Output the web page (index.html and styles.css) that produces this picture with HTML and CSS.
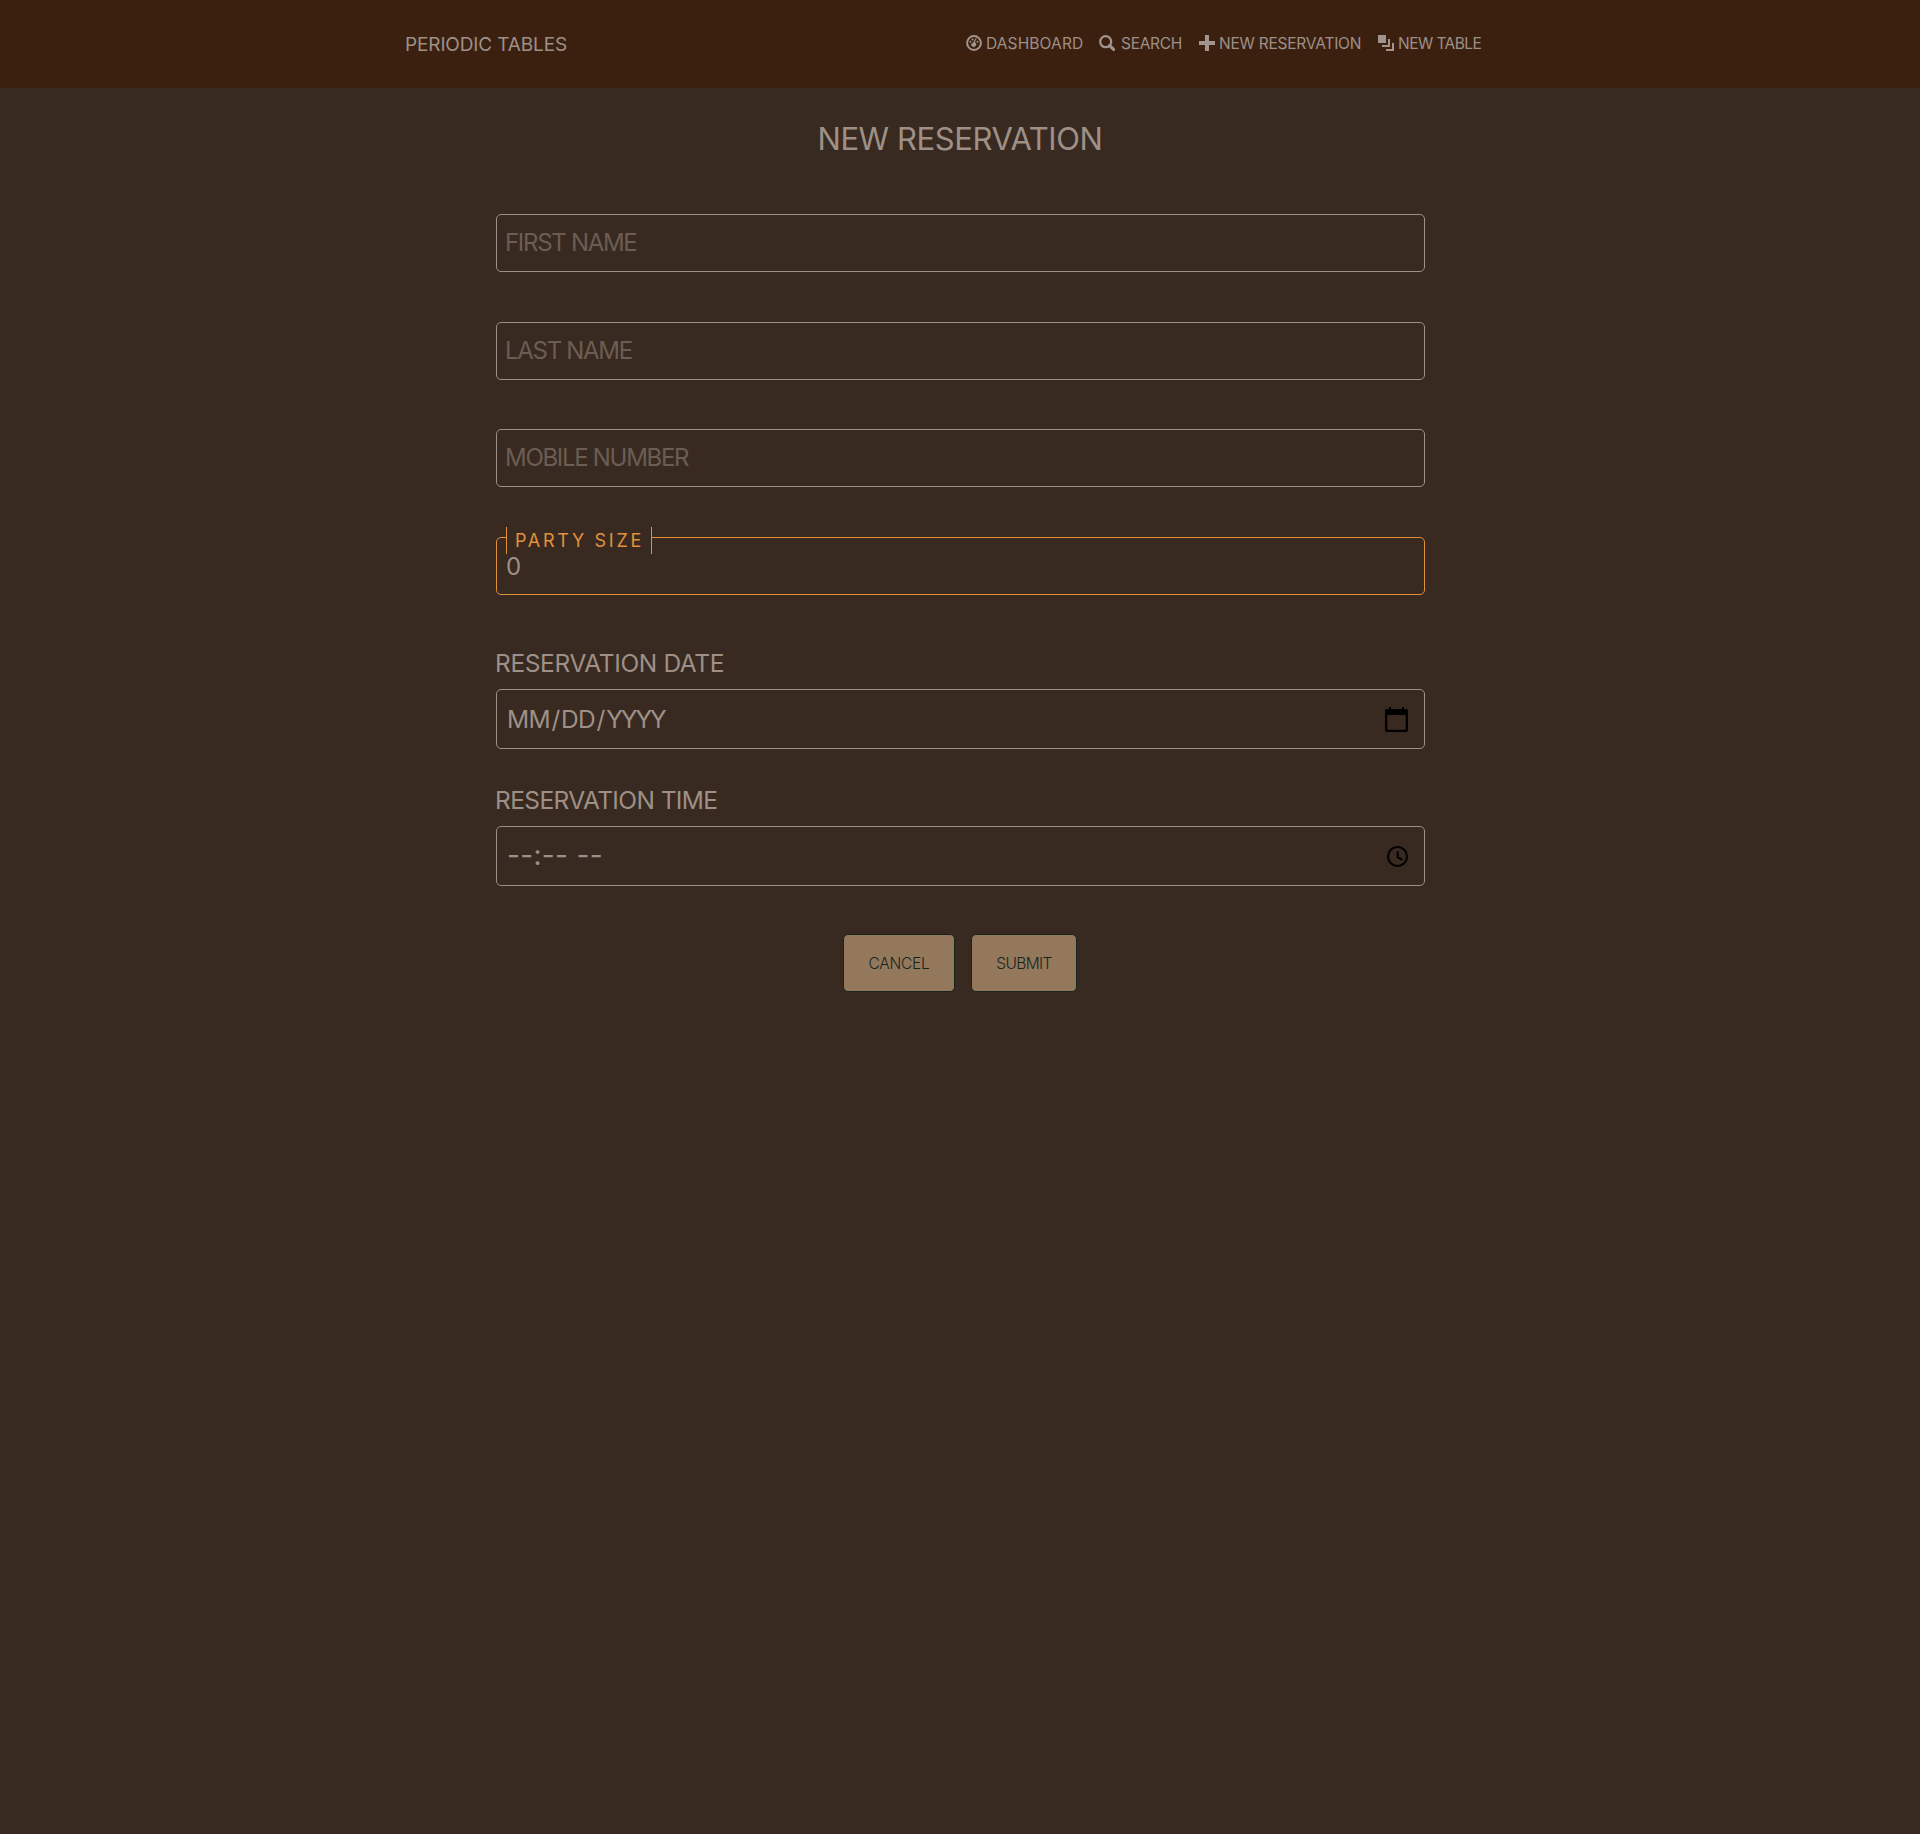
FILE: index.html
```
<!DOCTYPE html>
<html lang="en">
<head>
<meta charset="utf-8">
<title>Periodic Tables</title>
<link rel="stylesheet" href="styles.css">
</head>
<body>
<header class="header">
  <a class="brand">PERIODIC TABLES</a>
  <nav class="nav">
    <a class="nav-item">
      <svg class="icon" viewBox="0 0 16 16"><circle cx="8" cy="8" r="6.9" fill="none" stroke="currentColor" stroke-width="2"/><circle cx="4.4" cy="6.8" r="1"/><circle cx="6.6" cy="4.5" r="1"/><circle cx="11.5" cy="6.8" r="1"/><path d="M10.8 3.6L8.7 7.2a2.2 2.2 0 1 1-1.6.2L9.7 3.3zM4.6 8.4l3 1 1.2 3-3-1.2z"/></svg>
      <span class="t-dashboard">DASHBOARD</span>
    </a>
    <a class="nav-item">
      <svg class="icon" viewBox="0 0 16 16"><circle cx="6.7" cy="6.7" r="5.5" fill="none" stroke="currentColor" stroke-width="2.3"/><path d="M10.6 10.6l4 3.8" stroke="currentColor" stroke-width="3.2" stroke-linecap="round"/></svg>
      <span class="t-search">SEARCH</span>
    </a>
    <a class="nav-item">
      <svg class="icon" viewBox="0 0 16 16"><path d="M6 0h4v6h6v4h-6v6H6v-6H0V6h6z"/></svg>
      <span class="t-reservation">NEW RESERVATION</span>
    </a>
    <a class="nav-item">
      <svg class="icon" viewBox="0 0 16 16"><path d="M0 0h8v8H0zM10 4h2v8H4v-2h6zM14 8h2v8H8v-2h6z"/></svg>
      <span class="t-table">NEW TABLE</span>
    </a>
  </nav>
</header>
<main class="main">
  <h1 class="title">NEW RESERVATION</h1>
  <form class="form">
    <input class="field" type="text" placeholder="FIRST NAME">
    <input class="field" type="text" placeholder="LAST NAME">
    <input class="field" type="text" placeholder="MOBILE NUMBER">
    <div class="party">
      <input class="field field-active" type="text" value="0">
      <label class="legend">PARTY SIZE</label>
    </div>
    <label class="label label-date">RESERVATION DATE</label>
    <div class="picker">
      <span class="t-date">MM<span class="slash">/</span>DD<span class="slash">/</span><span class="year">YYYY</span></span>
      <svg class="calendar" viewBox="0 0 23 25"><path fill-rule="evenodd" d="M4 0h2v2h11V0h2v2h2a2 2 0 0 1 2 2v19a2 2 0 0 1-2 2H2a2 2 0 0 1-2-2V4a2 2 0 0 1 2-2h2zM2.3 8v14.8h18.4V8z"/></svg>
    </div>
    <label class="label label-time">RESERVATION TIME</label>
    <div class="picker">
      <span class="t-time">--:-- --</span>
      <svg class="clock" viewBox="0 0 21 21"><circle cx="10.5" cy="10.5" r="9.5"/><path d="M10.7 5.2v6l4.5 2.7"/></svg>
    </div>
    <div class="actions">
      <button class="button t-cancel" type="button">CANCEL</button>
      <button class="button t-submit" type="button">SUBMIT</button>
    </div>
  </form>
</main>
</body>
</html>
```
FILE: styles.css
```
* { box-sizing: border-box; }
body {
  margin: 0;
  min-height: 1834px;
  background: #382a20;
  color: #9e9087;
  font-family: Inter, "Liberation Sans", sans-serif;
}
.header {
  display: flex;
  justify-content: space-between;
  align-items: center;
  height: 88px;
  padding: 0 443px 0 405px;
  background: #3b2010;
}
.brand { font-size: 19px; letter-spacing: -.13px; }
.nav {
  display: grid;
  grid-template-columns: 133px 100px 179px 99px;
}
.nav-item {
  display: flex;
  align-items: center;
  font-size: 15.5px;
  line-height: 20px;
  white-space: nowrap;
}
.icon { flex: none; width: 16px; height: 16px; margin: 0 4px 3px 0; fill: currentColor; color: #a2948c; }
.t-dashboard { letter-spacing: .13px; }
.t-search { letter-spacing: -.3px; padding-left: 2px; }
.t-reservation { letter-spacing: -.23px; }
.t-table { letter-spacing: -.55px; }
.title {
  margin: 0;
  padding-top: 30px;
  height: 126px;
  font-size: 31px;
  font-weight: 400;
  line-height: 41px;
  letter-spacing: -.41px;
  text-align: center;
}
.form {
  display: flex;
  flex-direction: column;
  width: 929px;
  margin: 0 495px 0 496px;
}
.field {
  width: 100%;
  height: 58px;
  margin: 0 0 50px;
  padding: 0 8px 2px;
  border: 1px solid #9e9087;
  border-radius: 5px;
  outline: 0;
  background: transparent;
  color: #9e9087;
  font: 24px Inter, "Liberation Sans", sans-serif;
  letter-spacing: -1.3px;
}
.field:nth-child(2) { margin-bottom: 49px; }
.field::placeholder { color: #6b5d53; opacity: 1; }
.party { position: relative; height: 58px; }
.field-active { display: block; margin: 0; padding: 0 9px; border-color: #e2913a; }
.legend {
  position: absolute;
  left: 10px;
  top: -10px;
  width: 146px;
  height: 27px;
  padding-left: 8px;
  border: solid #e2913a;
  border-width: 0 1px;
  background: #382a20;
  color: #e2913a;
  font-size: 18px;
  line-height: 28px;
  letter-spacing: 2.7px;
  white-space: nowrap;
}
.label { font-size: 24.5px; line-height: 34px; margin-left: -1px; }
.label-date { margin-top: 51px; margin-bottom: 9px; letter-spacing: -.37px; }
.label-time { margin-top: 34px; margin-bottom: 9px; letter-spacing: -.6px; }
.picker {
  display: flex;
  align-items: center;
  justify-content: space-between;
  height: 60px;
  padding: 0 16px 0 10px;
  border: 1px solid #9e9087;
  border-radius: 5px;
  font-size: 24.5px;
  line-height: 34px;
}
.t-date { letter-spacing: -.7px; }
.slash { padding: 0 1.5px; }
.year { letter-spacing: -2px; }
.t-time { font-size: 28px; letter-spacing: .35px; padding-bottom: 3px; }
.calendar { width: 23px; height: 25px; }
.clock { width: 21px; height: 21px; fill: none; stroke: #000; stroke-width: 2; }
.actions { display: flex; justify-content: center; gap: 16px; margin: 48px 1px 0 0; }
.button {
  height: 58px;
  padding: 0;
  border: 1px solid #16261f;
  border-radius: 5px;
  background: #94785b;
  color: #16261f;
  font: 300 15.5px Inter, "Liberation Sans", sans-serif;
}
.t-cancel { width: 112px; letter-spacing: -.26px; }
.t-submit { width: 106px; letter-spacing: -.6px; }
```
